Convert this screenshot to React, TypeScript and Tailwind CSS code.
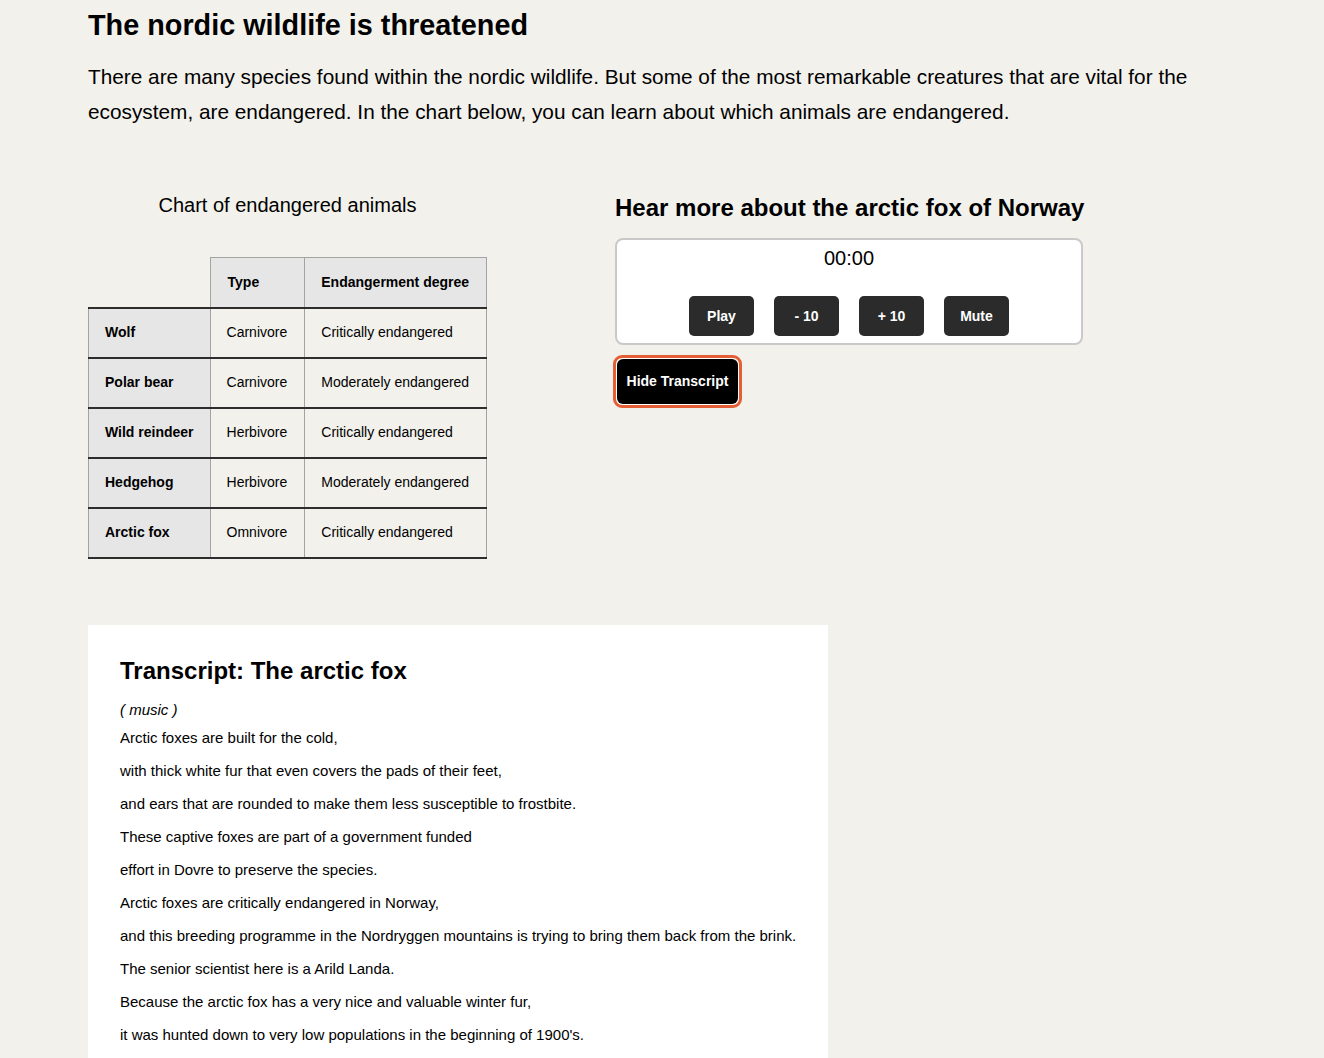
import React from "react";

const rows = [
  { name: "Wolf", type: "Carnivore", degree: "Critically endangered" },
  { name: "Polar bear", type: "Carnivore", degree: "Moderately endangered" },
  { name: "Wild reindeer", type: "Herbivore", degree: "Critically endangered" },
  { name: "Hedgehog", type: "Herbivore", degree: "Moderately endangered" },
  { name: "Arctic fox", type: "Omnivore", degree: "Critically endangered" },
];

const transcript = [
  "Arctic foxes are built for the cold,",
  "with thick white fur that even covers the pads of their feet,",
  "and ears that are rounded to make them less susceptible to frostbite.",
  "These captive foxes are part of a government funded",
  "effort in Dovre to preserve the species.",
  "Arctic foxes are critically endangered in Norway,",
  "and this breeding programme in the Nordryggen mountains is trying to bring them back from the brink.",
  "The senior scientist here is a Arild Landa.",
  "Because the arctic fox has a very nice and valuable winter fur,",
  "it was hunted down to very low populations in the beginning of 1900's.",
];

const PlayerButton = ({ label }: { label: string }) => (
  <button className="w-[65px] h-[40px] rounded-[5px] bg-[#2b2b2b] text-white text-[14px] font-bold">
    {label}
  </button>
);

export default function App() {
  return (
    <div className="min-h-screen bg-[#f2f1ec] text-black font-['Liberation_Sans',Arial,sans-serif]">
      <div className="px-[88px] pb-10">
        <h1 className="pt-[7px] text-[28.8px] leading-[36px] font-bold">
          The nordic wildlife is threatened
        </h1>
        <p className="mt-[16px] max-w-[1148px] text-[20.8px] leading-[35px]">
          There are many species found within the nordic wildlife. But some of
          the most remarkable creatures that are vital for the ecosystem, are
          endangered. In the chart below, you can learn about which animals are
          endangered.
        </p>

        <div className="mt-[61px] flex flex-row items-start gap-[128px]">
          {/* chart */}
          <div className="w-[399px] shrink-0 pt-[3px]">
            <div className="text-center text-[20px] leading-[24px]">
              Chart of endangered animals
            </div>
            <table className="mt-[40px] border-collapse whitespace-nowrap text-[14px] leading-[17px]">
              <thead>
                <tr className="h-[50px] border-b-2 border-[#2d2d2d]">
                  <td className="border-0 p-0" />
                  <th className="border border-[#a3a3a3] bg-[#e6e6e6] pl-[17px] pr-4 text-left font-bold">
                    Type
                  </th>
                  <th className="border border-[#a3a3a3] bg-[#e6e6e6] pl-4 pr-[17px] text-left font-bold">
                    Endangerment degree
                  </th>
                </tr>
              </thead>
              <tbody>
                {rows.map((r) => (
                  <tr key={r.name} className="h-[50px] border-b-2 border-[#2d2d2d]">
                    <th className="border-x border-[#a3a3a3] bg-[#e6e6e6] px-4 text-left font-bold">
                      {r.name}
                    </th>
                    <td className="border-x border-[#a3a3a3] pl-[16px] pr-[17px]">{r.type}</td>
                    <td className="border-x border-[#a3a3a3] pl-4 pr-[17px]">{r.degree}</td>
                  </tr>
                ))}
              </tbody>
            </table>
          </div>

          {/* audio player */}
          <div className="w-[468px] pt-[4px]">
            <h2 className="text-[24px] leading-[28px] font-bold whitespace-nowrap">
              Hear more about the arctic fox of Norway
            </h2>
            <div className="mt-[16px] rounded-lg border-2 border-[#c9c9c9] bg-white pt-[6px] pb-[7px]">
              <div className="text-center text-[20px] leading-[24px]">00:00</div>
              <div className="mt-[26px] flex flex-row justify-center gap-[20px]">
                <PlayerButton label="Play" />
                <PlayerButton label="- 10" />
                <PlayerButton label="+ 10" />
                <PlayerButton label="Mute" />
              </div>
            </div>
            <div className="mt-[10px] ml-[-2px] inline-block rounded-[9px] border-[3px] border-[#e45f35] bg-white p-[1px]">
              <button className="block h-[45px] w-[121px] rounded-[6px] bg-black text-[14px] font-bold text-white">
                Hide Transcript
              </button>
            </div>
          </div>
        </div>

        {/* transcript */}
        <div className="mt-[66px] w-[740px] bg-white pl-[32px] pr-[20px] pt-[32px] pb-[20px]">
          <h2 className="text-[24px] leading-[28px] font-bold">
            Transcript: The arctic fox
          </h2>
          <p className="mt-[16px] text-[15px] leading-[18px] italic">( music )</p>
          <div className="mt-[10px] flex flex-col gap-[15px] text-[15px] leading-[18px]">
            {transcript.map((line) => (
              <p key={line} className="whitespace-nowrap">{line}</p>
            ))}
          </div>
        </div>
      </div>
    </div>
  );
}
